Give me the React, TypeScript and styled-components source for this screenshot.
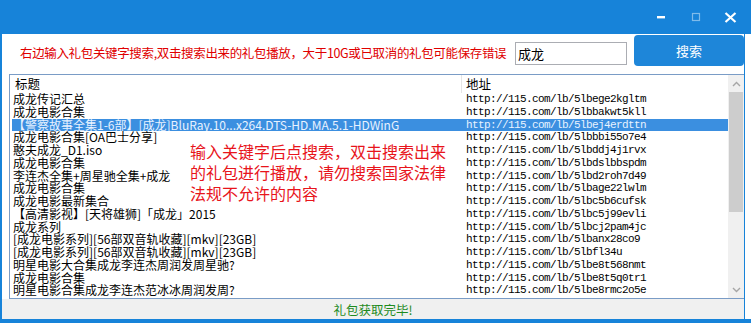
import React from "react";
import styled, { createGlobalStyle } from "styled-components";

const BLUE = "#1783d9";
const CJK = `"Noto Sans CJK SC", "Noto Sans", sans-serif`;

const GlobalStyle = createGlobalStyle`
  html, body { margin: 0; padding: 0; background: #fff; overflow: hidden; }
  body { font-family: ${CJK}; }
  * { box-sizing: border-box; }
`;

const Window = styled.div`
  width: 751px;
  height: 323px;
  display: flex;
  flex-direction: column;
  background: #fff;
`;

const TitleBar = styled.div`
  height: 34px;
  flex: none;
  background: ${BLUE};
  display: flex;
  justify-content: flex-end;
  align-items: center;
  padding-right: 3px;
`;

const CaptionButton = styled.div`
  width: 35px;
  height: 34px;
  display: flex;
  align-items: center;
  justify-content: center;
`;

const Body = styled.div`
  flex: 1;
  min-height: 0;
  display: flex;
  border-left: 2px solid ${BLUE};
  border-bottom: 4px solid ${BLUE};
`;

const Main = styled.div`
  width: 743px;
  display: flex;
  flex-direction: column;
  border-right: 1px solid ${BLUE};
`;

const Gutter = styled.div`
  flex: 1;
  background: #fff;
`;

const SearchRow = styled.div`
  height: 40px;
  flex: none;
  display: flex;
  align-items: flex-start;
  padding-left: 18px;
`;

const Hint = styled.div`
  flex: 1;
  margin-top: 11px;
  margin-right: 1px;
  font-size: 12.5px;
  letter-spacing: -0.35px;
  line-height: 16px;
  color: #e00000;
  white-space: nowrap;
`;

const SearchInput = styled.input`
  width: 112px;
  height: 23px;
  margin-top: 8px;
  border: 1px solid #abadb3;
  padding: 0 2px;
  font-family: ${CJK};
  font-size: 13px;
  color: #000;
  outline: none;
`;

const SearchButton = styled.button`
  width: 110px;
  height: 31px;
  margin-top: 1px;
  margin-left: 7px;
  border: none;
  border-radius: 4px;
  background: #1e86d9;
  color: #fff;
  font-family: ${CJK};
  font-size: 13px;
  padding: 0;
`;

const ListBox = styled.div`
  position: relative;
  height: 225px;
  flex: none;
  margin-left: 7px;
  border: 1px solid #7a9cc6;
  border-right: none;
  display: flex;
`;

const Table = styled.div`
  flex: 1;
  display: flex;
  flex-direction: column;
  overflow: hidden;
`;

const Header = styled.div`
  height: 18px;
  flex: none;
  display: flex;
  align-items: center;
  margin-left: 2px;
`;

const HeaderCell = styled.div<{ $w?: number; $sep?: boolean }>`
  ${(p) => (p.$w ? `width: ${p.$w}px;` : "flex: 1;")}
  height: 18px;
  line-height: 18px;
  padding-left: ${(p) => (p.$sep ? 4 : 3)}px;
  font-size: 12.5px;
  color: #000;
  border-right: ${(p) => (p.$w ? "1px solid #e5e5e5" : "none")};
`;

const Row = styled.div<{ $selected?: boolean }>`
  height: 12.75px;
  line-height: 12.75px;
  display: flex;
  margin-left: 2px;
  white-space: nowrap;
  background: ${(p) => (p.$selected ? "#3b8fe0" : "transparent")};
  color: ${(p) => (p.$selected ? "#e8f2ff" : "#000")};
`;

const TitleCell = styled.div`
  width: 450px;
  padding-left: 1px;
  font-size: 12px;
  overflow: hidden;
`;

const UrlCell = styled.div`
  flex: 1;
  padding-left: 4px;
  font-family: "Liberation Mono", monospace;
  font-size: 11px;
  letter-spacing: -0.6px;
  overflow: hidden;
`;

const ScrollBar = styled.div`
  width: 16px;
  flex: none;
  background: #f0f0f0;
  display: flex;
  flex-direction: column;
`;

const ArrowBox = styled.div`
  height: 17px;
  flex: none;
  display: flex;
  align-items: center;
  justify-content: center;
`;

const Track = styled.div`
  flex: 1;
`;

const Thumb = styled.div`
  height: 120px;
  margin: 0 1px;
  background: #cdcdcd;
`;

const Overlay = styled.div`
  position: absolute;
  left: 180px;
  top: 66px;
  font-size: 16px;
  line-height: 21px;
  color: #e8141b;
  white-space: nowrap;
`;

const StatusBar = styled.div`
  flex: 1;
  background: #f0f0f0;
  display: flex;
  align-items: center;
  justify-content: center;
  font-size: 12.5px;
  color: #1f8b1f;
`;

const rows: [string, string][] = [
  ["成龙传记汇总", "5lbege2kgltm"],
  ["成龙电影合集", "5lbbakwt5kll"],
  ["【警察故事全集1-6部】[成龙]BluRay.10...x264.DTS-HD.MA.5.1-HDWinG", "5lbej4erdttn"],
  ["成龙电影合集[OA巴士分享]", "5lbbbi55o7e4"],
  ["憨夫成龙_D1.iso", "5lbddj4j1rvx"],
  ["成龙电影合集", "5lbdslbbspdm"],
  ["李连杰全集+周星驰全集+成龙", "5lbd2roh7d49"],
  ["成龙电影合集", "5lbage22lwlm"],
  ["成龙电影最新集合", "5lbc5b6cufsk"],
  ["【高清影视】[天将雄狮]「成龙」2015", "5lbc5j99evli"],
  ["成龙系列", "5lbcj2pam4jc"],
  ["[成龙电影系列][56部双音轨收藏][mkv][23GB]", "5lbanx28co9"],
  ["[成龙电影系列][56部双音轨收藏][mkv][23GB]", "5lbfl34u"],
  ["明星电影大合集成龙李连杰周润发周星驰?", "5lbe8t568nmt"],
  ["成龙电影合集", "5lbe8t5q0tr1"],
  ["明星电影合集成龙李连杰范冰冰周润发周?", "5lbe8rmc2o5e"],
];

const Chevron = ({ up }: { up?: boolean }) => (
  <svg width="9" height="6" viewBox="0 0 9 6">
    <path
      d={up ? "M1 5 L4.5 1.5 L8 5" : "M1 1 L4.5 4.5 L8 1"}
      fill="none"
      stroke="#a6a6a6"
      strokeWidth="1.4"
    />
  </svg>
);

export default function App() {
  return (
    <Window>
      <GlobalStyle />
      <TitleBar>
        <CaptionButton>
          <svg width="10" height="10" viewBox="0 0 10 10">
            <rect x="1" y="4" width="8" height="2.4" fill="#fff" />
          </svg>
        </CaptionButton>
        <CaptionButton>
          <svg width="10" height="10" viewBox="0 0 10 10">
            <rect x="1.5" y="1.5" width="7" height="7" fill="none" stroke="rgba(255,255,255,0.45)" strokeWidth="1.2" />
          </svg>
        </CaptionButton>
        <CaptionButton>
          <svg width="13" height="11" viewBox="0 0 13 11">
            <path d="M1.5 1 L11.5 10 M11.5 1 L1.5 10" stroke="#fff" strokeWidth="2.2" />
          </svg>
        </CaptionButton>
      </TitleBar>
      <Body>
        <Main>
          <SearchRow>
            <Hint>右边输入礼包关键字搜索,双击搜索出来的礼包播放，大于10G或已取消的礼包可能保存错误</Hint>
            <SearchInput defaultValue="成龙" />
            <SearchButton>搜索</SearchButton>
          </SearchRow>
          <ListBox>
            <Table>
              <Header>
                <HeaderCell $w={450}>标题</HeaderCell>
                <HeaderCell $sep>地址</HeaderCell>
              </Header>
              {rows.map(([title, code], i) => (
                <Row key={i} $selected={i === 2}>
                  <TitleCell>{title}</TitleCell>
                  <UrlCell>{`http://115.com/lb/${code}`}</UrlCell>
                </Row>
              ))}
            </Table>
            <ScrollBar>
              <ArrowBox>
                <Chevron up />
              </ArrowBox>
              <Track>
                <Thumb />
              </Track>
              <ArrowBox>
                <Chevron />
              </ArrowBox>
            </ScrollBar>
            <Overlay>
              <div>输入关键字后点搜索，双击搜索出来</div>
              <div>的礼包进行播放，请勿搜索国家法律</div>
              <div>法规不允许的内容</div>
            </Overlay>
          </ListBox>
          <StatusBar>礼包获取完毕!</StatusBar>
        </Main>
        <Gutter />
      </Body>
    </Window>
  );
}
